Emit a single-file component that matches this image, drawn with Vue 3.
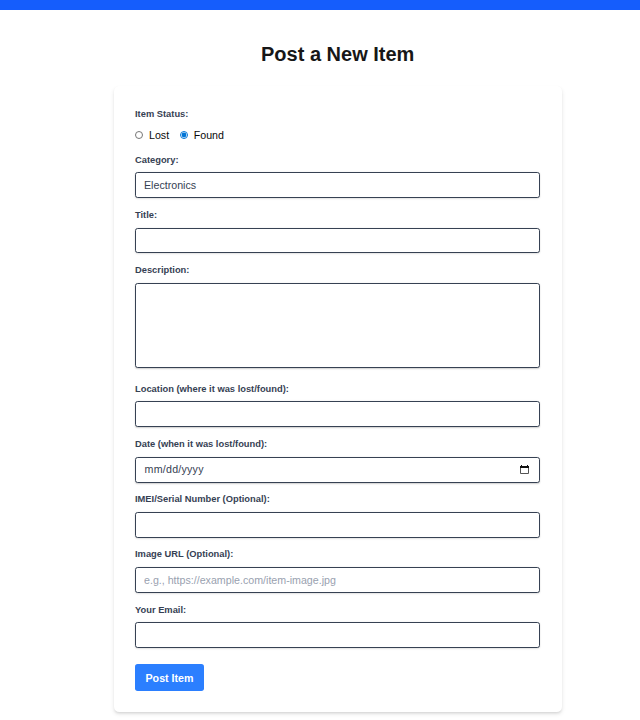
<script setup>
import { ref } from 'vue'

const status = ref('found')
const category = ref('Electronics')
const fields = [
  { id: 'location', label: 'Location (where it was lost/found):', type: 'text' },
  { id: 'date', label: 'Date (when it was lost/found):', type: 'date' },
  { id: 'serial', label: 'IMEI/Serial Number (Optional):', type: 'text' },
  { id: 'image', label: 'Image URL (Optional):', type: 'text', hint: 'e.g., https://example.com/item-image.jpg' },
  { id: 'email', label: 'Your Email:', type: 'email' }
]
</script>

<template>
  <div class="page">
    <header class="bar"></header>
    <main class="main">
      <h1 class="heading">Post a New Item</h1>
      <form class="card" @submit.prevent>
        <div class="field status">
          <span class="label">Item Status:</span>
          <div class="radios">
            <label class="option"><input v-model="status" type="radio" value="lost" /><span>Lost</span></label>
            <label class="option"><input v-model="status" type="radio" value="found" /><span>Found</span></label>
          </div>
        </div>
        <div class="field">
          <label class="label" for="category">Category:</label>
          <select id="category" v-model="category" class="control">
            <option>Electronics</option>
          </select>
        </div>
        <div class="field">
          <label class="label" for="title">Title:</label>
          <input id="title" class="control" type="text" />
        </div>
        <div class="field description">
          <label class="label" for="description">Description:</label>
          <textarea id="description" class="control area"></textarea>
        </div>
        <div v-for="f in fields" :key="f.id" class="field">
          <label class="label" :for="f.id">{{ f.label }}</label>
          <div v-if="f.type === 'date'" :id="f.id" class="control date">
            <span>mm/dd/yyyy</span>
            <svg class="calendar" viewBox="0 0 9 9" width="9" height="9">
              <path d="M0.5 1.5V8.5H8.5V1.5" fill="none" stroke="#555" />
              <path d="M0 1H1V0H2V1H7V0H8V1H9V3H0Z" fill="#111" />
            </svg>
          </div>
          <input v-else :id="f.id" class="control" :type="f.type" :placeholder="f.hint" />
        </div>
        <button class="submit" type="submit">Post Item</button>
      </form>
    </main>
  </div>
</template>

<style>
body {
  margin: 0;
  background: #fff;
}
</style>

<style scoped>
.page {
  height: 720px;
  overflow: hidden;
  font-family: "Liberation Sans", Arial, sans-serif;
  color: #171717;
}
.bar {
  height: 10px;
  background: #155dfc;
}
.main {
  width: 447.4px;
  margin-left: 114px;
  padding-top: 32px;
}
.heading {
  margin: 0 0 20.3px;
  font-size: 20px;
  line-height: 24px;
  font-weight: 700;
  text-align: center;
}
.card {
  box-sizing: border-box;
  width: 448px;
  height: 625.7px;
  padding: 21.3px 21.6px 21px 21px;
  border-radius: 5.33px;
  background: #fff;
  box-shadow: 0 2.67px 4px -0.67px rgba(0, 0, 0, 0.1), 0 1.33px 2.67px -1.33px rgba(0, 0, 0, 0.1);
}
.field {
  height: 44.4px;
  margin-bottom: 10.89px;
}
.field.status {
  height: 35.2px;
}
.field.description {
  height: 103.9px;
  margin-bottom: 14.62px;
}
.label {
  display: block;
  height: 13.33px;
  margin-bottom: 5.33px;
  font-size: 9.33px;
  line-height: 13.6px;
  font-weight: 700;
  color: #364153;
  white-space: nowrap;
}
.control {
  box-sizing: border-box;
  display: block;
  width: 405px;
  height: 25.87px;
  margin: 0;
  padding: 0 8px;
  border: 1px solid #364153;
  border-radius: 2.67px;
  outline: 0;
  appearance: none;
  background: #fff;
  box-shadow: 0 0.67px 2px rgba(0, 0, 0, 0.1), 0 0.67px 1.33px -0.67px rgba(0, 0, 0, 0.1);
  font-family: inherit;
  font-size: 10.67px;
  line-height: 16px;
  color: #364153;
}
.control::placeholder {
  color: #99a1af;
  opacity: 1;
}
.area {
  height: 85.2px;
  resize: none;
}
.date {
  display: flex;
  align-items: center;
  justify-content: space-between;
  height: 26.1px;
  padding: 0 10px 1px 8.6px;
  letter-spacing: 0.23px;
}
.calendar {
  display: block;
}
.radios {
  display: flex;
  gap: 10.6px;
  height: 16px;
  padding-top: 1px;
  font-size: 10.67px;
  line-height: 16px;
  color: #0a0a0a;
}
.option {
  display: flex;
  align-items: center;
}
.option input {
  width: 8px;
  height: 8px;
  margin: 0 6px 0 0;
  accent-color: #0075d7;
}
.submit {
  display: block;
  width: 69px;
  height: 27px;
  margin-top: 15.7px;
  padding: 1px 0 0;
  border: 0;
  border-radius: 2.67px;
  background: #2b7fff;
  color: #fff;
  font-family: inherit;
  font-size: 10.67px;
  font-weight: 700;
}
</style>
